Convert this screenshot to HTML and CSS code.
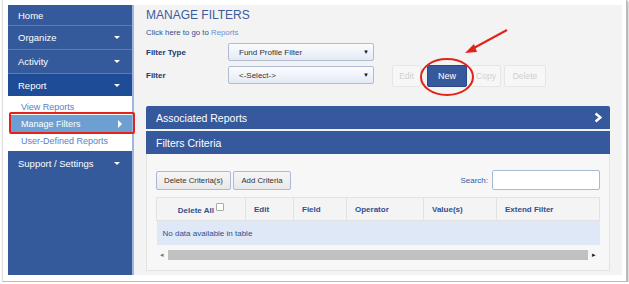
FILE: index.html
```html
<!DOCTYPE html>
<html lang="en">
<head>
  <meta charset="UTF-8" />
  <title>Manage Filters</title>
  <link rel="stylesheet" href="styles.css">
</head>
<body>

<div class="shot">
  <div class="app">

    <!-- left menu -->
    <aside class="sidebar">
      <div class="menu-item first">Home</div>
      <div class="menu-item">Organize <span class="caret"></span></div>
      <div class="menu-item">Activity <span class="caret"></span></div>
      <div class="menu-item active">Report <span class="caret"></span></div>
      <div class="submenu">
        <div class="sub-item">View Reports</div>
        <div class="sub-item current">Manage Filters <span class="tri"></span></div>
        <div class="sub-item">User-Defined Reports</div>
      </div>
      <div class="menu-item support">Support / Settings <span class="caret"></span></div>
    </aside>

    <main class="main">
      <h1>MANAGE FILTERS</h1>
      <p class="crumb">Click here to go to <a href="#">Reports</a></p>

      <div class="form-row">
        <label>Filter Type</label>
        <div class="select">Fund Profile Filter <span class="arrow">▼</span></div>
      </div>
      <div class="form-row">
        <label>Filter</label>
        <div class="select">&lt;-Select-&gt; <span class="arrow">▼</span></div>
        <div class="actions">
          <button class="btn off b-edit">Edit</button>
          <button class="btn primary">New</button>
          <button class="btn off b-copy">Copy</button>
          <button class="btn off b-del">Delete</button>
        </div>
      </div>

      <div class="bar bar-top">Associated Reports
        <svg class="chev" viewBox="0 0 10 12" width="8" height="11"><path d="M2 1 L8 6 L2 11" fill="none" stroke="#fff" stroke-width="3"/></svg>
      </div>
      <div class="bar">Filters Criteria</div>

      <div class="panel">
        <div class="toolbar">
          <button class="btn light b-delc">Delete Criteria(s)</button>
          <button class="btn light b-add">Add Criteria</button>
          <div class="search">Search: <span class="search-box"></span></div>
        </div>

        <table class="grid">
          <thead>
            <tr>
              <th class="c-del">Delete All <span class="check"></span></th>
              <th class="c-edit">Edit</th>
              <th class="c-field">Field</th>
              <th class="c-op">Operator</th>
              <th class="c-val">Value(s)</th>
              <th class="c-ext">Extend Filter</th>
            </tr>
          </thead>
          <tbody>
            <tr><td colspan="6">No data available in table</td></tr>
          </tbody>
        </table>

        <div class="hscroll">
          <span class="sarrow left">◂</span>
          <span class="thumb"></span>
          <span class="sarrow right">▸</span>
        </div>
      </div>
    </main>
  </div>

  <!-- annotations -->
  <div class="mark-rect"></div>
  <svg class="annot" width="629" height="284" viewBox="0 0 629 284">
    <ellipse cx="447" cy="77" rx="26" ry="18" fill="none" stroke="#e2231a" stroke-width="2"/>
    <line x1="507" y1="30" x2="472" y2="49" stroke="#e2231a" stroke-width="2"/>
    <path d="M465 53 L474 44 L477 52 Z" fill="#e2231a"/>
  </svg>
</div>

</body>
</html>
```

FILE: styles.css
```css
body {
  margin: 0;
  background: #fff;
  font-family: 'Liberation Sans', Arial, sans-serif;
}

.shot {
  position: relative;
  width: 614px;
  height: 270px;
  margin-left: 2px;
  padding: 5px 4px 6px 5px;
  border-right: 1px solid #bbb;
  border-bottom: 1px solid #bbb;
  border-left: 1px solid #ddd;
  box-shadow: 1px 1px 2px #999;
}

.app {
  display: flex;
  height: 270px;
}

/* sidebar */
.sidebar {
  width: 125px;
  background: #355a9b;
  border-right: 2px solid #9fb7de;
}

.menu-item {
  display: flex;
  align-items: center;
  justify-content: space-between;
  height: 23px;
  padding: 0 10px 0 10px;
  color: #fff;
  font-size: 9.5px;
  border-bottom: 1px solid #5b7cb6;
}

.menu-item.first {
  height: 20px;
}

.menu-item.active {
  background: #1f4c97;
  height: 22px;
  border-bottom: none;
}

.menu-item.support {
  height: 25px;
  border-bottom: none;
}

.caret {
  width: 0;
  height: 0;
  border-left: 3px solid transparent;
  border-right: 3px solid transparent;
  border-top: 3px solid #fff;
  margin-right: 2px;
}

.submenu {
  background: #fff;
  padding: 2px 0 2px 0;
}

.sub-item {
  display: flex;
  align-items: center;
  justify-content: space-between;
  height: 17px;
  padding: 0 10px 0 13px;
  font-size: 9px;
  color: #5a80c3;
}

.sub-item.current {
  background: #6d9fd2;
  color: #fff;
  margin-left: 3px;
  padding-left: 10px;
}

.tri {
  width: 0;
  height: 0;
  border-top: 4px solid transparent;
  border-bottom: 4px solid transparent;
  border-left: 4px solid #fff;
}

/* main */
.main {
  flex: 1;
  background: #f3f3f3;
  padding: 0 12px;
}

h1 {
  margin: 2px 0 0 0;
  font-size: 12px;
  font-weight: normal;
  color: #3a5c9e;
  line-height: 16px;
}

.crumb {
  margin: 5px 0 0 0;
  font-size: 7.8px;
  line-height: 10px;
  color: #2f4f8a;
}

.crumb a {
  color: #6b8fcf;
  text-decoration: none;
}

.form-row {
  display: flex;
  align-items: center;
  height: 18px;
  margin-top: 5px;
}

.form-row label {
  width: 82px;
  font-size: 8px;
  font-weight: bold;
  color: #22386a;
}

.select {
  display: flex;
  align-items: center;
  justify-content: space-between;
  width: 130px;
  height: 16px;
  padding: 0 4px 0 10px;
  border: 1px solid #aebcd4;
  border-radius: 2px;
  background: linear-gradient(#fbfcfe, #e4eaf4);
  font-size: 8px;
  color: #333;
}

.select .arrow {
  font-size: 6px;
  color: #111;
}

.actions {
  display: flex;
  gap: 4px;
  align-self: flex-start;
  margin-left: 18px;
  margin-top: -1px;
}

.btn {
  font-family: 'Liberation Sans', Arial, sans-serif;
  font-size: 8.5px;
  height: 22px;
  padding: 0;
  border-radius: 2px;
}

.btn.off {
  background: #f7f7f7;
  border: 1px solid #e6e6e6;
  color: #cfcfcf;
}

.b-edit { width: 29px; margin-right: 2px; }
.b-copy { width: 30px; margin-right: -1px; }
.b-del { width: 42px; }

.btn.primary {
  background: #35599c;
  border: 1px solid #2b4a85;
  color: #fff;
  width: 40px;
  font-size: 9px;
}

.bar {
  display: flex;
  align-items: center;
  justify-content: space-between;
  height: 23px;
  padding: 0 8px 0 10px;
  background: #35599c;
  color: #fff;
  font-size: 10.5px;
  margin-top: 2px;
}

.bar-top {
  margin-top: 22px;
  border-radius: 2px 2px 0 0;
}

.panel {
  height: 100px;
  background: #f7f7f7;
  border: 1px solid #e3e3e3;
  border-top: none;
  padding: 16px 9px 0 9px;
}

.toolbar {
  display: flex;
  align-items: center;
  gap: 2px;
}

.btn.light {
  height: 19px;
  background: linear-gradient(#f6f6f6, #e9e9e9);
  border: 1px solid #a9bad6;
  color: #333;
  font-size: 7.8px;
}

.b-delc { width: 75px; }
.b-add { width: 58px; }

.search {
  margin-left: auto;
  display: flex;
  align-items: center;
  gap: 4px;
  font-size: 8px;
  color: #3a5c9e;
}

.search-box {
  width: 106px;
  height: 18px;
  background: #fff;
  border: 1px solid #a9bad6;
  border-radius: 2px;
}

.grid {
  width: 444px;
  margin-top: 7px;
  border-collapse: collapse;
  font-size: 8px;
}

.grid th {
  height: 22px;
  background: #f4f4f4;
  border: 1px solid #e2e2e2;
  color: #2f4f8f;
  text-align: left;
  padding: 0 0 0 8px;
}

.grid th.c-del {
  width: 88px;
  text-align: center;
  padding: 0;
}

.c-edit { width: 39px; }
.c-field { width: 44px; }
.c-op { width: 68px; }
.c-val { width: 64px; }

.check {
  display: inline-block;
  width: 6px;
  height: 6px;
  border: 1px solid #aaa;
  border-radius: 1px;
  background: #fff;
  vertical-align: 2px;
}

.grid td {
  height: 24px;
  background: #dfe8f6;
  color: #2f4f8f;
  padding: 0 0 0 6px;
}

.hscroll {
  display: flex;
  align-items: center;
  width: 444px;
  height: 12px;
  margin-top: 4px;
  font-size: 7px;
  color: #777;
}

.sarrow {
  width: 12px;
  text-align: center;
}

.sarrow.right {
  color: #222;
}

.thumb {
  flex: 1;
  height: 10px;
  background: #c1c1c1;
}

/* annotation overlays */
.mark-rect {
  position: absolute;
  left: 6px;
  top: 112px;
  width: 122px;
  height: 18px;
  border: 2px solid #e2231a;
  border-radius: 2px;
}

.annot {
  position: absolute;
  left: -3px;
  top: 0;
  pointer-events: none;
}
```
